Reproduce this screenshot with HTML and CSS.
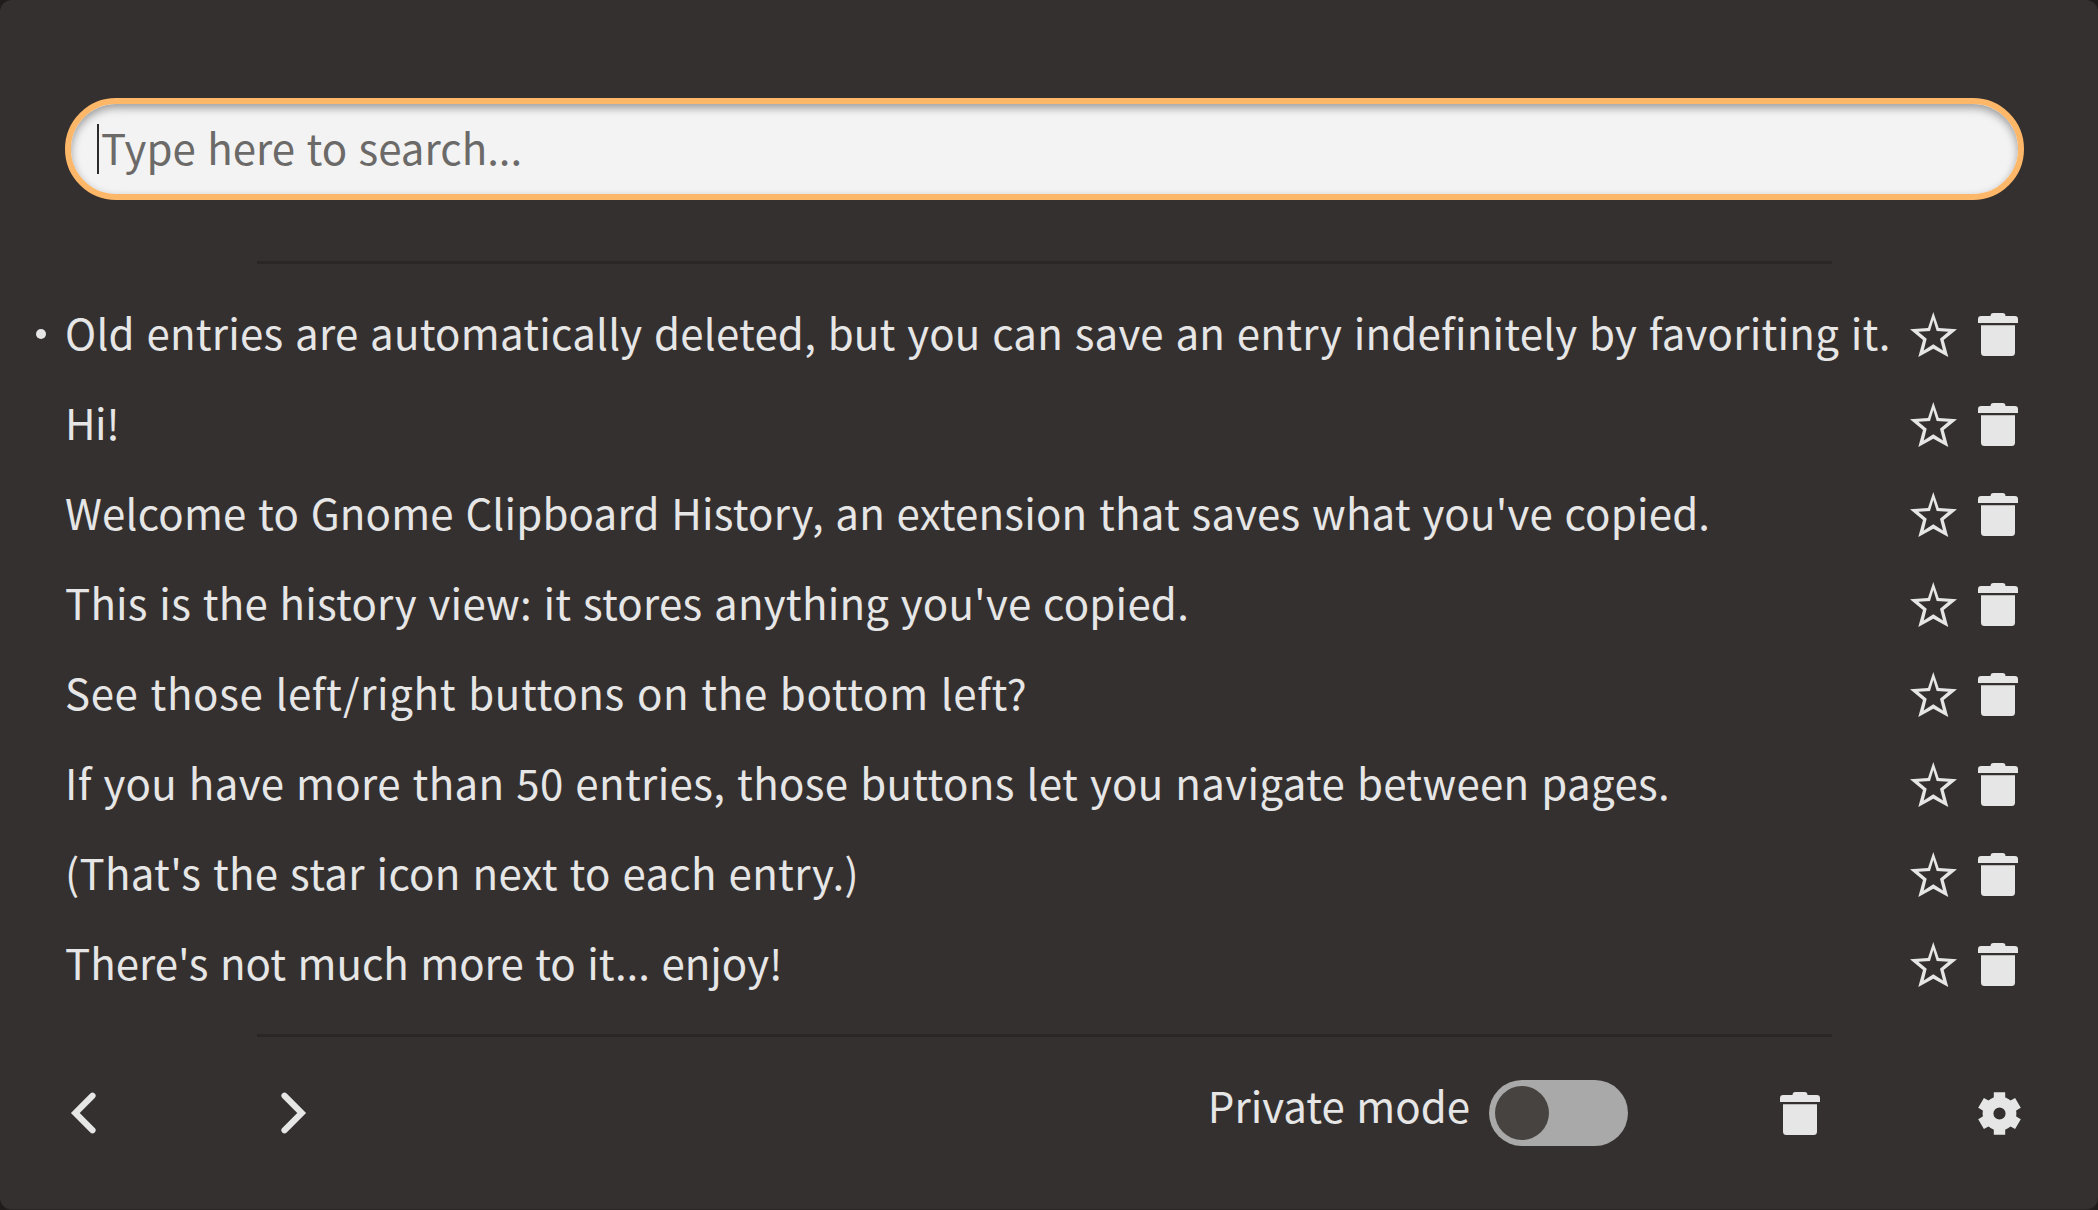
FILE: index.html
```
<!DOCTYPE html>
<html lang="en">
<head>
<meta charset="utf-8">
<title>Clipboard History</title>
<link rel="stylesheet" href="styles.css">
</head>
<body>
<svg class="sprite" width="0" height="0" aria-hidden="true">
  <symbol id="star" viewBox="0 0 49 47"><path fill-rule="evenodd" d="M24.3 1L29.7 17L48 18.3L34.7 29L39.3 46L24.3 37.7L9.3 46L14 29L1 18.3L19 17ZM24.3 9L21 20L9.3 20.7L17.7 27.7L14.7 39.5L24.3 33.3L34 39.5L31 27.7L39.3 20.7L27.7 20Z"/></symbol>
  <symbol id="trash" viewBox="0 0 40 43"><path d="M0 10V6.200Q0 3 3.200 3H12.500Q12.500 0 15.500 0H24.500Q27.500 0 27.500 3H36.800Q40 3 40 6.200V10ZM3 12.300H37V39.500Q37 43 33.500 43H6.500Q3 43 3 39.500Z"/></symbol>
  <symbol id="gear" viewBox="-21.500 -21.500 43 43">
    <circle r="11.500" fill="none" stroke="currentColor" stroke-width="10.800"/>
    <path id="teeth" d="M-5.700 -21.300H5.700V-16L7.500 -13H-7.500L-5.700 -16ZM-5.700 21.300H5.700V16L7.500 13H-7.500L-5.700 16Z"/>
    <use href="#teeth" transform="rotate(60)"/>
    <use href="#teeth" transform="rotate(120)"/>
  </symbol>
</svg>
<main class="menu">
  <div class="search"><span class="caret"></span><span class="placeholder">Type here to search...</span></div>
  <hr class="divider">
  <ul class="entries">
    <li class="entry current"><span class="label">Old entries are automatically deleted, but you can save an entry indefinitely by favoriting it.</span><svg class="star"><use href="#star"/></svg><svg class="trash"><use href="#trash"/></svg></li>
    <li class="entry"><span class="label">Hi!</span><svg class="star"><use href="#star"/></svg><svg class="trash"><use href="#trash"/></svg></li>
    <li class="entry"><span class="label">Welcome to Gnome Clipboard History, an extension that saves what you've copied.</span><svg class="star"><use href="#star"/></svg><svg class="trash"><use href="#trash"/></svg></li>
    <li class="entry"><span class="label">This is the history view: it stores anything you've copied.</span><svg class="star"><use href="#star"/></svg><svg class="trash"><use href="#trash"/></svg></li>
    <li class="entry"><span class="label">See those left/right buttons on the bottom left?</span><svg class="star"><use href="#star"/></svg><svg class="trash"><use href="#trash"/></svg></li>
    <li class="entry"><span class="label">If you have more than 50 entries, those buttons let you navigate between pages.</span><svg class="star"><use href="#star"/></svg><svg class="trash"><use href="#trash"/></svg></li>
    <li class="entry"><span class="label">(That's the star icon next to each entry.)</span><svg class="star"><use href="#star"/></svg><svg class="trash"><use href="#trash"/></svg></li>
    <li class="entry"><span class="label">There's not much more to it... enjoy!</span><svg class="star"><use href="#star"/></svg><svg class="trash"><use href="#trash"/></svg></li>
  </ul>
  <hr class="divider">
  <footer class="footer">
    <svg class="chevron" viewBox="0 0 28 44"><path d="M22.500 4.700L5.300 22L22.500 39.300"/></svg>
    <svg class="chevron next" viewBox="0 0 28 44"><path d="M5.500 4.700L22.700 22L5.500 39.300"/></svg>
    <span class="private">Private mode</span>
    <span class="toggle"><span class="knob"></span></span>
    <svg class="trash clear"><use href="#trash"/></svg>
    <svg class="gear"><use href="#gear"/></svg>
  </footer>
</main>
</body>
</html>
```
FILE: styles.css
```
* { box-sizing: border-box; }
body {
  margin: 0;
  background: #1f1c1b;
  color: #e6e6e6;
  font: 42px/90px "Noto Sans CJK SC", "Noto Sans", sans-serif;
  word-spacing: 2px;
}
svg { flex: none; fill: currentColor; }
.sprite { position: absolute; }
.menu {
  width: 2098px;
  height: 1210px;
  padding: 98px 74px 0 65px;
  background: #34302f;
  border-radius: 12px;
  border-bottom: 1px solid #2a2625;
}
.search {
  display: flex;
  align-items: center;
  height: 102px;
  padding-left: 26px;
  border: 6px solid #fdb769;
  border-radius: 51px;
  background: #f3f3f3;
  box-shadow: inset 0 4px 8px rgba(0, 0, 0, .36);
  color: #6b6a68;
}
.caret { width: 2px; height: 50px; background: #2b2b2b; }
.placeholder { margin-left: 2px; padding-bottom: 5px; letter-spacing: 0; }
.divider {
  width: 1575px;
  height: 3px;
  margin: 61px 0 0 192px;
  border: 0;
  background: #2a2625;
}
.entries {
  height: 720px;
  margin: 25px 0 0;
  padding: 0;
  list-style: none;
}
.entry {
  position: relative;
  display: flex;
  align-items: center;
  height: 90px;
  padding: 0 6px 0 0;
  white-space: nowrap;
}
.current::before {
  content: "";
  position: absolute;
  left: -29.500px;
  top: 40px;
  width: 10px;
  height: 10px;
  border-radius: 50%;
  background: currentColor;
}
.label { flex: 1; min-width: 0; padding-bottom: 5px; letter-spacing: .22px; }
.entry:nth-child(2) .label { letter-spacing: -.5px; }
.entry:nth-child(3) .label { letter-spacing: .19px; }
.entry:nth-child(5) .label { letter-spacing: .63px; }
.entry:nth-child(6) .label { letter-spacing: .34px; }
.entry:nth-child(7) .label { letter-spacing: .3px; }
.entry:nth-child(8) .label { letter-spacing: .01px; }
.star { width: 49px; height: 47px; margin-right: 20px; }
.trash { width: 40px; height: 43px; }
.entries + .divider { margin-top: 25px; }
.footer {
  display: flex;
  align-items: center;
  height: 90px;
  margin-top: 31px;
  padding: 0 3px 0 5px;
  white-space: nowrap;
}
.chevron {
  width: 28px;
  height: 44px;
  fill: none;
  stroke: currentColor;
  stroke-width: 6.200px;
  stroke-linecap: round;
}
.next { margin-left: 181px; }
.private { margin-left: auto; padding-bottom: 16px; letter-spacing: .02px; }
.toggle {
  flex: none;
  width: 138.500px;
  height: 66px;
  margin: 0 152.500px 0 19px;
  padding: 6px;
  border-radius: 33px;
  background: #a9a9a9;
}
.knob {
  display: block;
  width: 54px;
  height: 54px;
  border-radius: 50%;
  background: #474340;
}
.clear { margin-right: 158px; }
.gear { width: 43px; height: 43px; }
```
